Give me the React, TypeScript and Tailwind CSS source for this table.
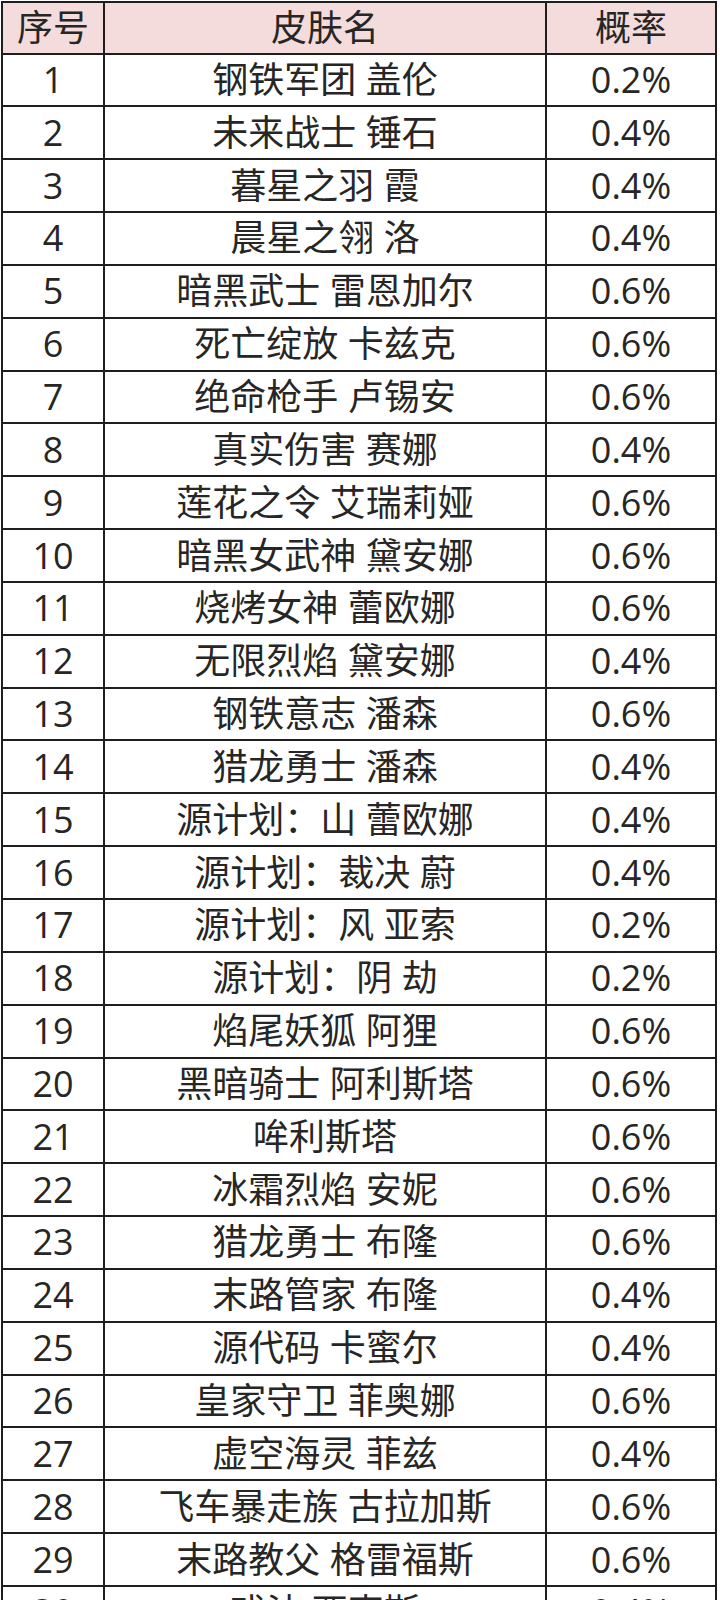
const ROWS: [string, string][] = [
  ['钢铁军团 盖伦', '0.2%'],
  ['未来战士 锤石', '0.4%'],
  ['暮星之羽 霞', '0.4%'],
  ['晨星之翎 洛', '0.4%'],
  ['暗黑武士 雷恩加尔', '0.6%'],
  ['死亡绽放 卡兹克', '0.6%'],
  ['绝命枪手 卢锡安', '0.6%'],
  ['真实伤害 赛娜', '0.4%'],
  ['莲花之令 艾瑞莉娅', '0.6%'],
  ['暗黑女武神 黛安娜', '0.6%'],
  ['烧烤女神 蕾欧娜', '0.6%'],
  ['无限烈焰 黛安娜', '0.4%'],
  ['钢铁意志 潘森', '0.6%'],
  ['猎龙勇士 潘森', '0.4%'],
  ['源计划：山 蕾欧娜', '0.4%'],
  ['源计划：裁决 蔚', '0.4%'],
  ['源计划：风 亚索', '0.2%'],
  ['源计划：阴 劫', '0.2%'],
  ['焰尾妖狐 阿狸', '0.6%'],
  ['黑暗骑士 阿利斯塔', '0.6%'],
  ['哞利斯塔', '0.6%'],
  ['冰霜烈焰 安妮', '0.6%'],
  ['猎龙勇士 布隆', '0.6%'],
  ['末路管家 布隆', '0.4%'],
  ['源代码 卡蜜尔', '0.4%'],
  ['皇家守卫 菲奥娜', '0.6%'],
  ['虚空海灵 菲兹', '0.4%'],
  ['飞车暴走族 古拉加斯', '0.6%'],
  ['末路教父 格雷福斯', '0.6%'],
  ['戏法 西克斯', '0.4%'],
];

function Row({ a, b, c, head }: { a: string; b: string; c: string; head?: boolean }) {
  return (
    <div
      className={
        'grid grid-cols-[102px_442px_1fr] border-b-2 border-[#1e1e1e] ' +
        (head ? 'h-[52px] bg-[#f3dcdb]' : 'h-[52.85px] bg-white')
      }
    >
      <div className="flex items-center justify-center border-r-2 border-[#1e1e1e]">{a}</div>
      <div className="flex items-center justify-center border-r-2 border-[#1e1e1e]">{b}</div>
      <div className="flex items-center justify-center">{c}</div>
    </div>
  );
}

export default function App() {
  return (
    <div
      className="h-[1600px] w-[720px] overflow-hidden bg-white pt-[0.5px] text-[36px] leading-none text-[#262626]"
      style={{ fontFamily: '"Open Sans", "Noto Sans CJK SC", sans-serif' }}
    >
      <div className="ml-[1px] w-[716px] border-x-2 border-t-2 border-[#1e1e1e]">
        <Row a="序号" b="皮肤名" c="概率" head />
        {ROWS.map(([name, p], i) => (
          <Row key={i} a={String(i + 1)} b={name} c={p} />
        ))}
      </div>
    </div>
  );
}
